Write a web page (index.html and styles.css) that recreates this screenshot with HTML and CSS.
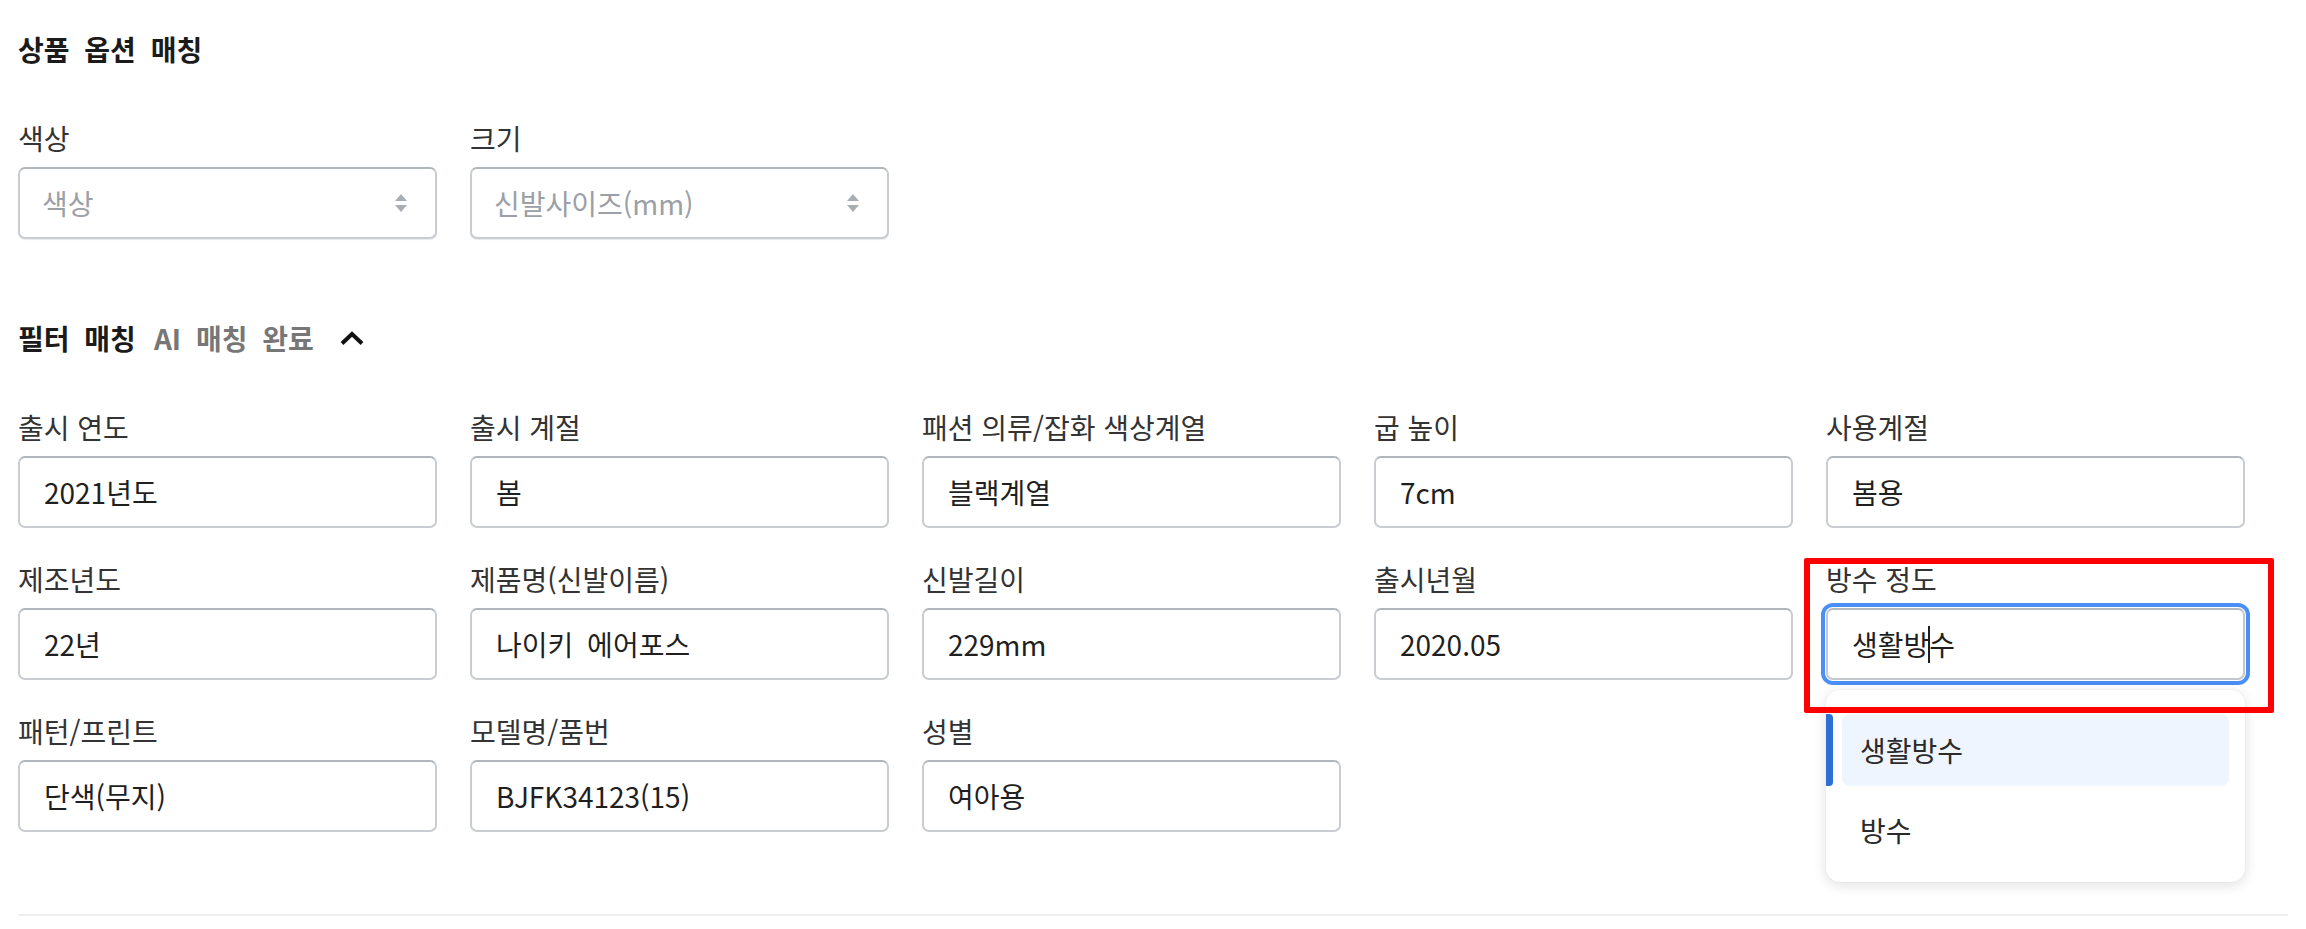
FILE: index.html
```html
<!DOCTYPE html>
<html lang="ko">
<head>
<meta charset="utf-8">
<title>상품 옵션 매칭</title>
<link rel="stylesheet" href="styles.css">
</head>
<body>
<div class="page">
  <h2 class="title">상품 옵션 매칭</h2>

  <div class="grid options">
    <div class="field">
      <div class="label">색상</div>
      <div class="select">
        <span class="placeholder">색상</span>
        <span class="arrows"><i class="up"></i><i class="down"></i></span>
      </div>
    </div>
    <div class="field">
      <div class="label">크기</div>
      <div class="select">
        <span class="placeholder">신발사이즈(mm)</span>
        <span class="arrows"><i class="up"></i><i class="down"></i></span>
      </div>
    </div>
  </div>

  <div class="section-head">
    <span class="head-main">필터 매칭</span>
    <span class="head-sub">AI 매칭 완료</span>
    <svg class="chev" width="24" height="14" viewBox="0 0 24 14"><polyline points="2,12.5 12,3 22,12.5" fill="none" stroke="#111" stroke-width="4" stroke-linejoin="miter"/></svg>
  </div>

  <div class="grid filters">
    <div class="field"><div class="label">출시 연도</div><div class="input">2021년도</div></div>
    <div class="field"><div class="label">출시 계절</div><div class="input">봄</div></div>
    <div class="field"><div class="label">패션 의류/잡화 색상계열</div><div class="input">블랙계열</div></div>
    <div class="field"><div class="label">굽 높이</div><div class="input">7cm</div></div>
    <div class="field"><div class="label">사용계절</div><div class="input">봄용</div></div>

    <div class="field"><div class="label">제조년도</div><div class="input">22년</div></div>
    <div class="field"><div class="label">제품명(신발이름)</div><div class="input">나이키 에어포스</div></div>
    <div class="field"><div class="label">신발길이</div><div class="input">229mm</div></div>
    <div class="field"><div class="label">출시년월</div><div class="input">2020.05</div></div>
    <div class="field active">
      <div class="label">방수 정도</div>
      <div class="input focused">생활방<span class="caret"></span>수</div>
      <ul class="dropdown">
        <li class="opt selected">생활방수</li>
        <li class="opt">방수</li>
      </ul>
      <div class="highlight"></div>
    </div>

    <div class="field"><div class="label">패턴/프린트</div><div class="input">단색(무지)</div></div>
    <div class="field"><div class="label">모델명/품번</div><div class="input">BJFK34123(15)</div></div>
    <div class="field"><div class="label">성별</div><div class="input">여아용</div></div>
  </div>

  <hr class="divider">
</div>
</body>
</html>
```

FILE: styles.css
```css
* { box-sizing: border-box; }

body {
  margin: 0;
  background: #ffffff;
  font-family: "Noto Sans CJK KR", "Noto Sans", sans-serif;
  font-size: 28px;
  line-height: 38px;
  color: #222222;
}

.page {
  padding: 30px 18px 0 18px;
}

.title {
  margin: 0;
  font-size: 28px;
  line-height: 38px;
  font-weight: 700;
  color: #1b1b1b;
  word-spacing: 7px;
}

.grid {
  display: grid;
  grid-template-columns: repeat(5, 419px);
  column-gap: 33px;
  row-gap: 32px;
}

.options {
  margin-top: 51px;
}

.field {
  display: flex;
  flex-direction: column;
}

.label {
  height: 38px;
  margin-bottom: 10px;
  color: #333333;
  white-space: nowrap;
}

.select,
.input {
  height: 72px;
  border: 2px solid #c9cdd1;
  border-top-color: #b1b6bb;
  border-radius: 7px;
  background: #ffffff;
  display: flex;
  align-items: center;
  white-space: nowrap;
}

.select {
  padding: 0 28px 0 22px;
  justify-content: space-between;
  box-shadow: 0 1px 1px rgba(0, 0, 0, 0.08);
}

.placeholder {
  color: #9ba0a6;
}

.arrows {
  display: flex;
  flex-direction: column;
  gap: 4px;
}

.arrows i {
  display: block;
  width: 0;
  height: 0;
  border-left: 6.5px solid transparent;
  border-right: 6.5px solid transparent;
}

.arrows .up { border-bottom: 7px solid #a9aeb3; }
.arrows .down { border-top: 7px solid #a9aeb3; }

.input {
  padding: 0 24px;
  color: #1f1f1f;
  word-spacing: 6px;
}

.section-head {
  margin-top: 80px;
  display: flex;
  align-items: center;
  height: 38px;
  font-weight: 700;
  word-spacing: 7px;
}

.head-main {
  color: #1b1b1b;
}

.head-sub {
  margin-left: 18px;
  color: #777777;
}

.chev {
  margin-left: 26px;
}

.filters {
  margin-top: 51px;
}

.active {
  position: relative;
}

.focused {
  box-shadow: 0 0 0 1px #ffffff, 0 0 0 5px #4a8ff5;
  border-color: #c4c7cb;
  border-top-color: #b6babf;
}

.caret {
  display: inline-block;
  width: 2px;
  height: 37px;
  background: #1f1f1f;
  margin: 0 -1px;
}

.dropdown {
  position: absolute;
  top: calc(100% + 10px);
  left: 0;
  right: 0;
  margin: 0;
  padding: 24px 16px 16px 16px;
  list-style: none;
  background: #ffffff;
  border-radius: 14px;
  box-shadow: 0 3px 14px rgba(0, 0, 0, 0.13), 0 0 2px rgba(0, 0, 0, 0.06);
  z-index: 2;
}

.opt {
  position: relative;
  height: 72px;
  display: flex;
  align-items: center;
  padding-left: 18px;
  border-radius: 8px;
  color: #2a2a2a;
}

.opt + .opt {
  margin-top: 8px;
}

.opt.selected {
  background: #eff5fe;
}

.opt.selected::before {
  content: "";
  position: absolute;
  left: -16px;
  top: 0;
  bottom: 0;
  width: 7px;
  background: #2e6fd3;
  border-radius: 0 4px 4px 0;
}

.highlight {
  position: absolute;
  top: -2px;
  left: -22px;
  right: -29px;
  bottom: -33px;
  border: 6px solid #ff0000;
  border-radius: 2px;
  z-index: 3;
  pointer-events: none;
}

.divider {
  margin: 82px 0 0 0;
  border: 0;
  height: 2px;
  background: #eeeeee;
}
```
